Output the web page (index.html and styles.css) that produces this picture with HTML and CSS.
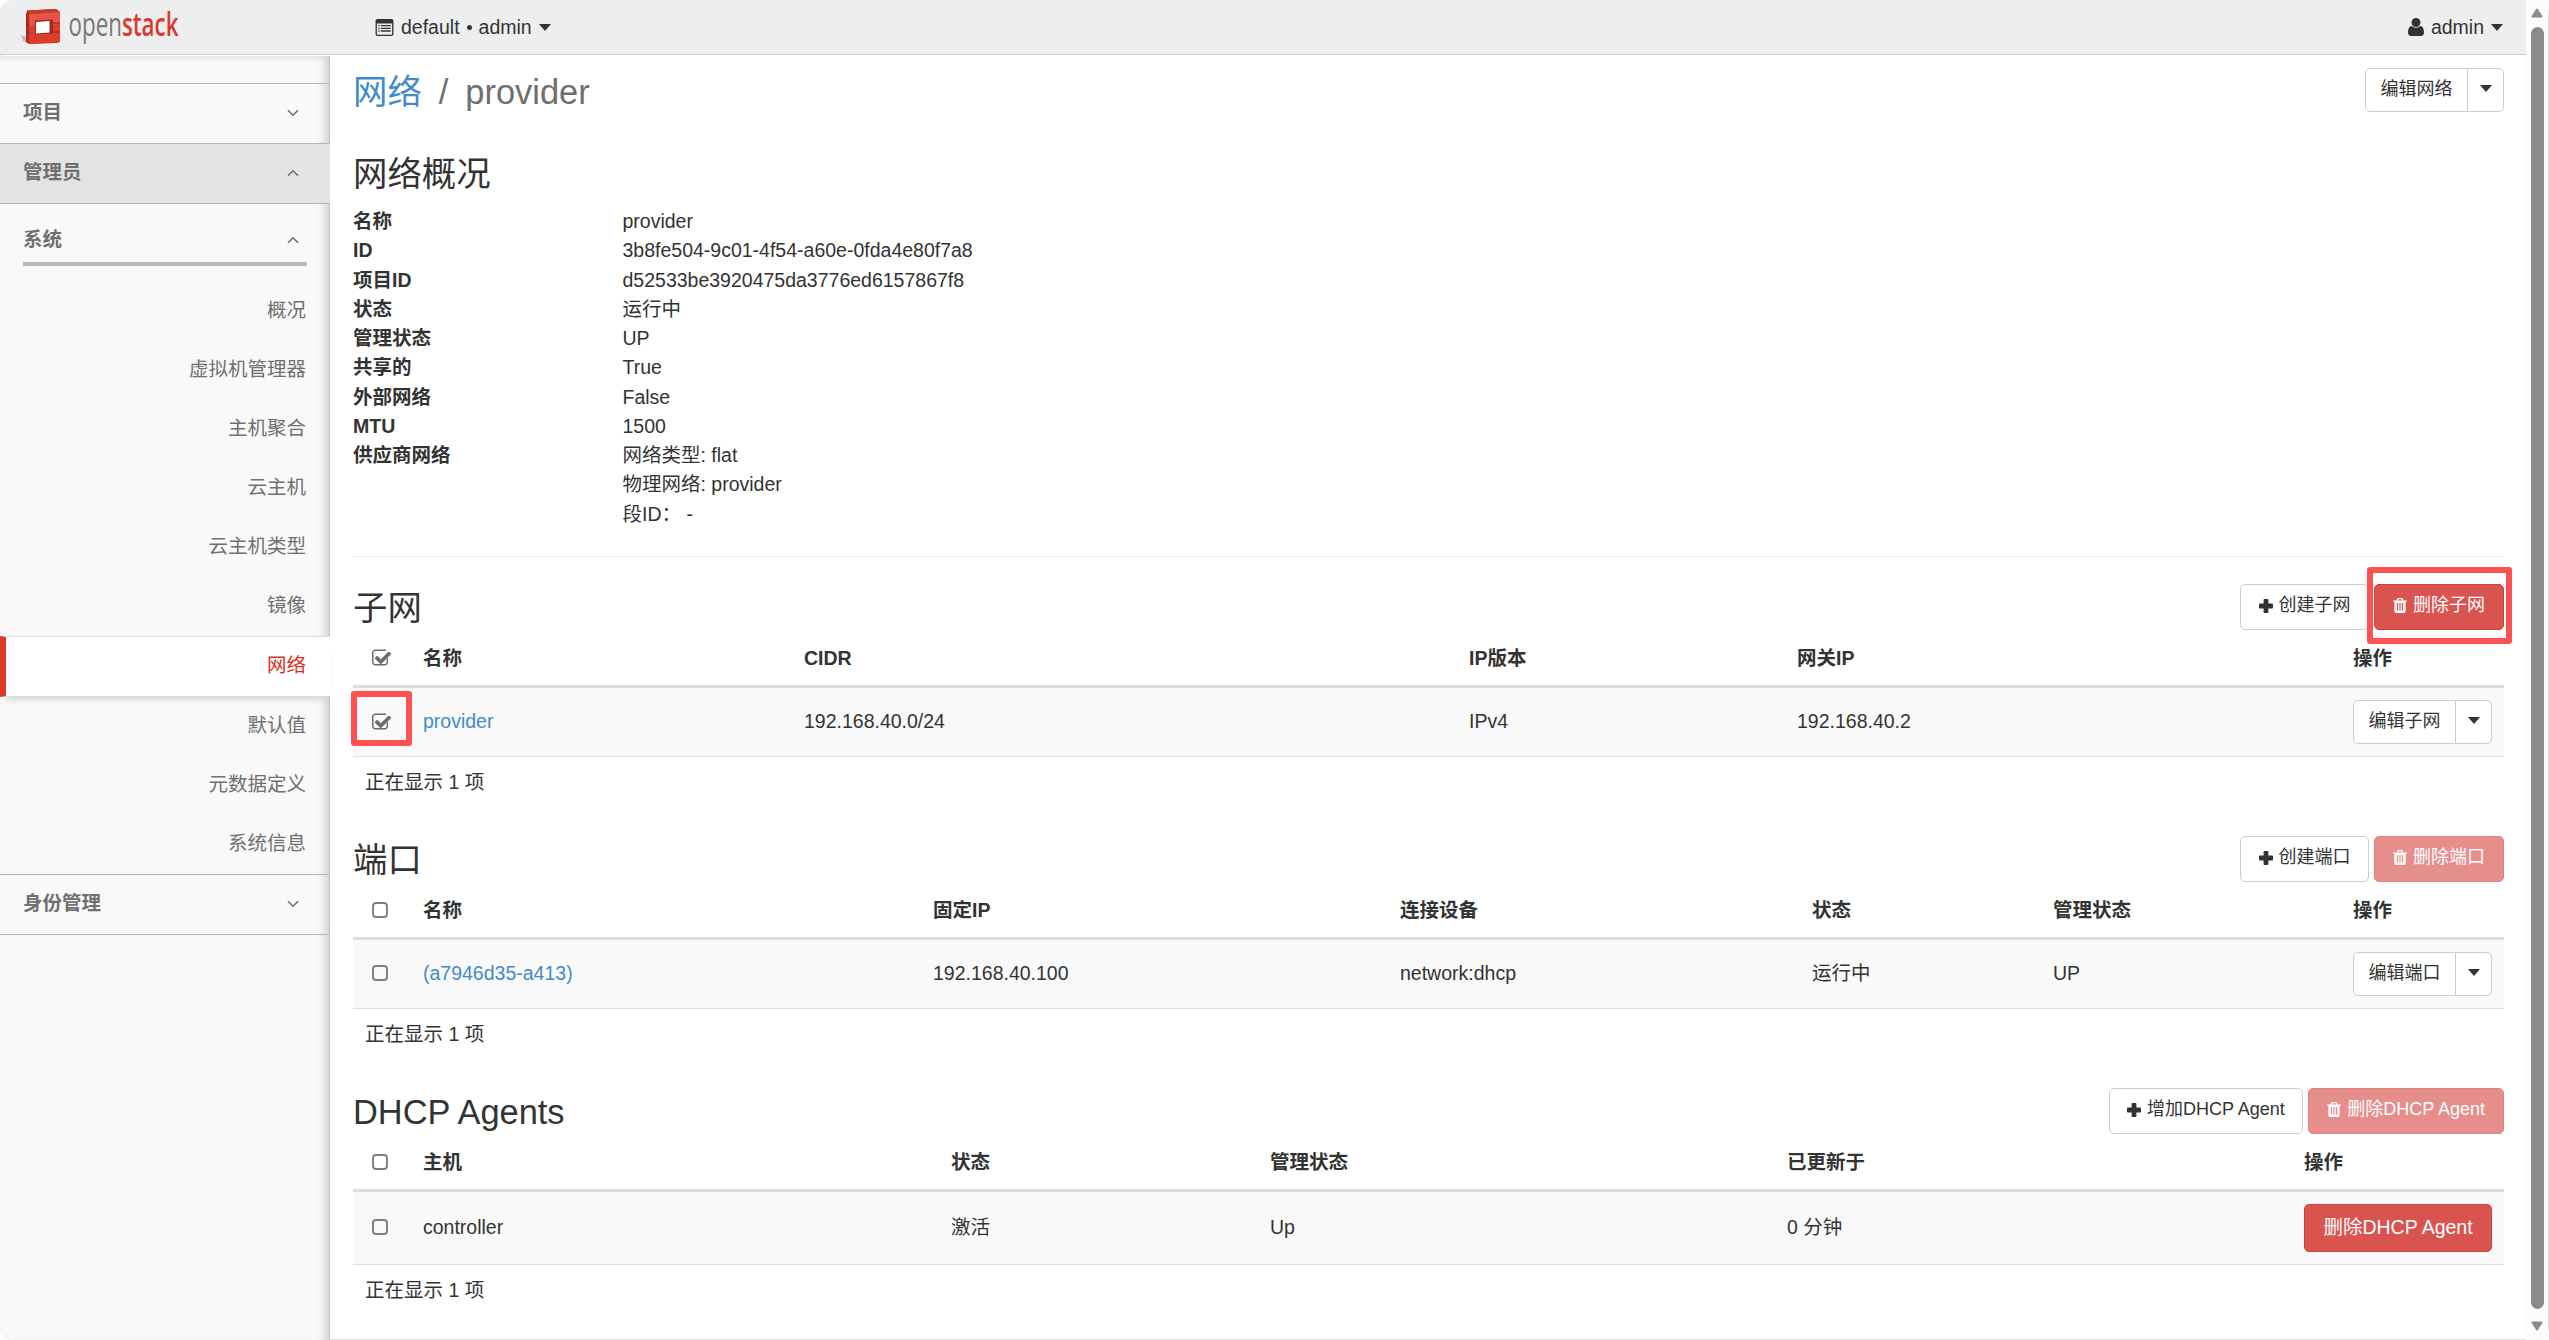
FILE: index.html
```html
<!DOCTYPE html>
<html lang="zh-CN">
<head>
  <meta charset="UTF-8">
  <meta name="viewport" content="width=device-width, initial-scale=1.0">
  <title>网络 / provider - OpenStack Dashboard</title>
  <link rel="stylesheet" href="styles.css">
</head>
<body>
  <!-- Icon sprites -->
  <svg class="sprites" width="0" height="0">
    <symbol id="check-on" viewBox="0 0 1664 1536">
      <path d="M1408 802v318q0 119-84.500 203.500t-203.500 84.500h-832q-119 0-203.500-84.500t-84.500-203.500v-832q0-119 84.500-203.500t203.500-84.500h832q63 0 117 25 15 7 18 23 3 17-9 29l-49 49q-10 10-23 10-3 0-9-2-23-6-45-6h-832q-66 0-113 47t-47 113v832q0 66 47 113t113 47h832q66 0 113-47t47-113v-254q0-13 9-22l64-64q10-10 23-10 6 0 12 3 20 8 20 29zM1639 441l-814 814q-24 24-57 24t-57-24l-430-430q-24-24-24-57t24-57l110-110q24-24 57-24t57 24l263 263 647-647q24-24 57-24t57 24l110 110q24 24 24 57t-24 57z" transform="translate(0 20)"/>
    </symbol>
    <symbol id="trash" viewBox="0 0 1408 1536">
      <path d="M512 1248v-704q0-14-9-23t-23-9h-64q-14 0-23 9t-9 23v704q0 14 9 23t23 9h64q14 0 23-9t9-23zM768 1248v-704q0-14-9-23t-23-9h-64q-14 0-23 9t-9 23v704q0 14 9 23t23 9h64q14 0 23-9t9-23zM1024 1248v-704q0-14-9-23t-23-9h-64q-14 0-23 9t-9 23v704q0 14 9 23t23 9h64q14 0 23-9t9-23zM480 256h448l-48-117q-7-9-17-11h-317q-10 2-17 11zM1408 288v64q0 14-9 23t-23 9h-96v948q0 83-47 143.500t-113 60.500h-832q-66 0-113-58.500t-47-141.500v-952h-96q-14 0-23-9t-9-23v-64q0-14 9-23t23-9h309l70-167q15-37 54-63t79-26h320q40 0 79 26t54 63l70 167h309q14 0 23 9t9 23z"/>
    </symbol>
    <symbol id="plus" viewBox="0 0 14 14">
      <path d="M5.500 0h3a.9.9 0 0 1 .9.900v3.700h3.700a.9.900 0 0 1 .9.900v3a.9.900 0 0 1-.9.900H9.400v3.700a.9.900 0 0 1-.9.900h-3a.9.900 0 0 1-.9-.9V9.400H.9a.9.900 0 0 1-.9-.9v-3a.9.900 0 0 1 .9-.9h3.700V.9a.9.900 0 0 1 .9-.9z"/>
    </symbol>
    <symbol id="list-alt" viewBox="0 0 20 19">
      <path fill-rule="evenodd" d="M2 0h16a2 2 0 0 1 2 2v15a2 2 0 0 1-2 2H2a2 2 0 0 1-2-2V2a2 2 0 0 1 2-2zM1.500 5v11.500q0 1 1 1h15q1 0 1-1V5z"/>
      <path d="M3 6.700h1.500v1.500H3zM3 9.700h1.500v1.500H3zM3 12.700h1.500v1.500H3zM6 6.700h11v1.500H6zM6 9.700h11v1.500H6zM6 12.700h11v1.500H6z"/>
    </symbol>
    <symbol id="user" viewBox="0 0 16 18">
      <path d="M8 9a4.400 4.400 0 1 0 0-9 4.400 4.400 0 0 0 0 9zM4 8c-3 0-4 3.500-4 6.600C0 17 1.200 18 3 18h10c1.800 0 3-1 3-3.400C16 11.500 15 8 12 8c-1 1-2.300 1.700-4 1.700S5 9 4 8z"/>
    </symbol>
    <symbol id="chevron" viewBox="0 0 12 8">
      <path d="M1 1.200l5 5 5-5" fill="none" stroke="currentColor" stroke-width="1.600"/>
    </symbol>
  </svg>

  <div class="app">
    <div class="page">
      <nav class="topbar">
        <svg class="logo" width="200" height="54" viewBox="0 0 200 54">
          <path d="M21 35l6 2v6l-4-2z" fill="#bdbdbd"/>
          <path d="M27 10.500l29-1.500 4 3v30l-4 1-27 1-3-2V14z" fill="#b02a20"/>
          <path d="M27 10.500l29-1.500 4 3-30 3z" fill="#c8392e"/>
          <path d="M29 14.500l31-2.500v30l-31 2z" fill="#dd3d2b"/>
          <path d="M29 14.500l31-2.500v12l-31 2z" fill="#e5554a"/>
          <path d="M35 20.500l18-1v14l-18 1z" fill="#a3271d"/>
          <path d="M36 22l13.500-1v11.500L36 33.500z" fill="#fff"/>
          <path d="M26 24h4M26 33h4M53 23h7M53 32h7" stroke="#96241b" stroke-width="1"/>
          <text x="68.500" y="35.500" textLength="110" lengthAdjust="spacingAndGlyphs"><tspan class="logo-open">open</tspan><tspan class="logo-stack">stack</tspan></text>
        </svg>
        <a class="context">
          <svg class="icon-list"><use href="#list-alt"/></svg>
          <span>default</span><span class="dot"></span><span>admin</span>
          <i class="caret"></i>
        </a>
        <a class="user">
          <svg class="icon-user"><use href="#user"/></svg>
          <span>admin</span>
          <i class="caret"></i>
        </a>
      </nav>

      <div class="body">
        <aside class="sidebar">
          <div class="panel first">项目<svg class="chev"><use href="#chevron"/></svg></div>
          <div class="panel open">管理员<svg class="chev up"><use href="#chevron"/></svg></div>
          <div class="group">系统<svg class="chev up"><use href="#chevron"/></svg></div>
          <ul class="menu">
            <li>概况</li>
            <li>虚拟机管理器</li>
            <li>主机聚合</li>
            <li>云主机</li>
            <li>云主机类型</li>
            <li>镜像</li>
            <li class="active">网络</li>
            <li>默认值</li>
            <li>元数据定义</li>
            <li>系统信息</li>
          </ul>
          <div class="panel last">身份管理<svg class="chev"><use href="#chevron"/></svg></div>
        </aside>

        <main class="content">
          <header class="page-header">
            <h1><a>网络</a><span class="slash">/</span><span>provider</span></h1>
            <div class="btn-group"><span class="btn btn-sm">编辑网络</span><span class="btn btn-drop"><i class="caret"></i></span></div>
          </header>

          <h3 class="overview-title">网络概况</h3>
          <dl class="overview">
            <dt>名称</dt><dd>provider</dd>
            <dt>ID</dt><dd>3b8fe504-9c01-4f54-a60e-0fda4e80f7a8</dd>
            <dt>项目ID</dt><dd>d52533be3920475da3776ed6157867f8</dd>
            <dt>状态</dt><dd>运行中</dd>
            <dt>管理状态</dt><dd>UP</dd>
            <dt>共享的</dt><dd>True</dd>
            <dt>外部网络</dt><dd>False</dd>
            <dt>MTU</dt><dd>1500</dd>
            <dt>供应商网络</dt><dd>网络类型: flat<br>物理网络: provider<br>段ID： -</dd>
          </dl>
          <hr>

          <section class="block">
            <div class="block-head">
              <h3>子网</h3>
              <span class="btn btn-act"><svg class="icon-plus"><use href="#plus"/></svg>创建子网</span>
              <span class="btn btn-act btn-danger marked"><svg class="icon-trash"><use href="#trash"/></svg>删除子网<b class="mark mark-delete"></b></span>
            </div>
            <table class="subnets">
              <colgroup><col class="c0"><col class="c1"><col class="c2"><col class="c3"><col class="c4"><col></colgroup>
              <thead>
                <tr><th><svg class="check"><use href="#check-on"/></svg></th><th>名称</th><th>CIDR</th><th>IP版本</th><th>网关IP</th><th>操作</th></tr>
              </thead>
              <tbody>
                <tr>
                  <td class="marked"><svg class="check"><use href="#check-on"/></svg><b class="mark mark-check"></b></td>
                  <td><a>provider</a></td><td>192.168.40.0/24</td><td>IPv4</td><td>192.168.40.2</td>
                  <td><div class="btn-group"><span class="btn btn-sm">编辑子网</span><span class="btn btn-drop"><i class="caret"></i></span></div></td>
                </tr>
              </tbody>
            </table>
            <div class="count">正在显示 1 项</div>
          </section>

          <section class="block">
            <div class="block-head">
              <h3>端口</h3>
              <span class="btn btn-act"><svg class="icon-plus"><use href="#plus"/></svg>创建端口</span>
              <span class="btn btn-act btn-danger disabled"><svg class="icon-trash"><use href="#trash"/></svg>删除端口</span>
            </div>
            <table class="ports">
              <colgroup><col class="c0"><col class="c1"><col class="c2"><col class="c3"><col class="c4"><col class="c5"><col></colgroup>
              <thead>
                <tr><th><i class="box"></i></th><th>名称</th><th>固定IP</th><th>连接设备</th><th>状态</th><th>管理状态</th><th>操作</th></tr>
              </thead>
              <tbody>
                <tr>
                  <td><i class="box"></i></td>
                  <td><a>(a7946d35-a413)</a></td><td>192.168.40.100</td><td>network:dhcp</td><td>运行中</td><td>UP</td>
                  <td><div class="btn-group"><span class="btn btn-sm">编辑端口</span><span class="btn btn-drop"><i class="caret"></i></span></div></td>
                </tr>
              </tbody>
            </table>
            <div class="count">正在显示 1 项</div>
          </section>

          <section class="block">
            <div class="block-head">
              <h3>DHCP Agents</h3>
              <span class="btn btn-act"><svg class="icon-plus"><use href="#plus"/></svg>增加DHCP Agent</span>
              <span class="btn btn-act btn-danger disabled"><svg class="icon-trash"><use href="#trash"/></svg>删除DHCP Agent</span>
            </div>
            <table class="agents">
              <colgroup><col class="c0"><col class="c1"><col class="c2"><col class="c3"><col class="c4"><col></colgroup>
              <thead>
                <tr><th><i class="box"></i></th><th>主机</th><th>状态</th><th>管理状态</th><th>已更新于</th><th>操作</th></tr>
              </thead>
              <tbody>
                <tr>
                  <td><i class="box"></i></td>
                  <td>controller</td><td>激活</td><td>Up</td><td>0 分钟</td>
                  <td><span class="btn btn-row btn-danger">删除DHCP Agent</span></td>
                </tr>
              </tbody>
            </table>
            <div class="count">正在显示 1 项</div>
          </section>
        </main>
      </div>
    </div>

    <div class="scrollbar">
      <svg width="12" height="10" viewBox="0 0 12 10"><path d="M6 1.500L10.500 8.500H1.500z" fill="#8b8b8b" stroke="#8b8b8b" stroke-width="2" stroke-linejoin="round"/></svg>
      <div class="thumb"></div>
      <svg width="12" height="10" viewBox="0 0 12 10"><path d="M6 8.500L1.500 1.500h9z" fill="#8b8b8b" stroke="#8b8b8b" stroke-width="2" stroke-linejoin="round"/></svg>
    </div>
  </div>
</body>
</html>
```

FILE: styles.css
```css
* {
  box-sizing: border-box;
}
body {
  margin: 0;
  background: #fff;
  color: #333;
  font-family: "Liberation Sans", "Noto Sans CJK SC", sans-serif;
  font-size: 19.5px;
  line-height: 29.25px;
}
a {
  color: #428bca;
}
h1, h3 {
  margin: 0;
  font-size: 34.4px;
  font-weight: normal;
  line-height: 40px;
}
.sprites {
  position: absolute;
}
.app {
  display: flex;
  width: 2549px;
  height: 1340px;
  border-radius: 14px;
  overflow: hidden;
  box-shadow: inset 0 0 0 1px #ddd;
}
.page {
  display: flex;
  flex-direction: column;
  width: 2526px;
}

/* Top bar */
.topbar {
  display: flex;
  align-items: center;
  height: 55px;
  padding-right: 23px;
  background: #eee;
  border-bottom: 1px solid #ccc;
}
.logo {
  margin-right: 174px;
}
.logo text {
  font-family: "Open Sans", sans-serif;
  font-size: 33px;
}
.logo-open {
  fill: #777;
}
.logo-stack {
  fill: #d63a32;
  font-weight: 600;
}
.context, .user {
  display: flex;
  align-items: center;
  color: #333;
}
.context span, .user span {
  padding-top: 1px;
}
.user {
  margin-left: auto;
}
.icon-list {
  width: 21px;
  height: 17px;
  margin-right: 6px;
  fill: #333;
}
.icon-user {
  width: 16px;
  height: 18px;
  margin-right: 7px;
  fill: #333;
}
.context .dot {
  width: 5px;
  height: 5px;
  margin: 0 7px;
  padding: 0;
  border-radius: 50%;
  background: #333;
}
.caret {
  display: block;
  border: 6px solid transparent;
  border-top: 7px solid #333;
  border-bottom: 0;
}
.topbar .caret {
  margin-left: 7px;
}

/* Sidebar */
.body {
  display: flex;
  flex: 1;
}
.sidebar {
  width: 330px;
  margin-top: 1px;
  padding-top: 27px;
  background: #f9f9f9;
  border-right: 1px solid #c4c4c4;
  box-shadow: inset -7px 3px 8px -3px rgba(0, 0, 0, 0.16);
  color: #6f6f6f;
}
.panel, .group {
  display: flex;
  align-items: center;
  justify-content: space-between;
  font-weight: bold;
}
.panel {
  height: 60px;
  padding: 0 30px 2px 23px;
  border-bottom: 1px solid #b5b5b5;
}
.panel.first, .panel.last {
  height: 61px;
  border-top: 1px solid #b5b5b5;
}
.panel.open {
  margin-right: -1px;
  padding-right: 31px;
  background: #e1e3e5;
}
.group {
  height: 62px;
  margin: 0 22px 0 23px;
  padding: 13px 8px 0 0;
  border-bottom: 4px solid #b9b9b9;
}
.chev {
  width: 12px;
  height: 8px;
}
.chev.up {
  transform: rotate(180deg);
}
.menu {
  margin: 0;
  padding: 14.5px 0 0;
  list-style: none;
}
.menu li {
  height: 59.2px;
  padding: 15px 23px 0 0;
  text-align: right;
}
.menu .active {
  height: 61px;
  margin-right: -1px;
  padding-top: 14px;
  padding-right: 24px;
  background: #fff;
  border-top: 1px solid #ddd;
  border-bottom: 1px solid #ddd;
  border-left: 6px solid #db3b27;
  box-shadow: 0 6px 8px -5px rgba(0, 0, 0, 0.2);
  color: #d9301f;
}
.menu .active ~ li {
  padding-top: 14px;
}

/* Content */
.content {
  flex: 1;
  padding: 13px 22px 0 23px;
}
.page-header {
  display: flex;
  justify-content: space-between;
  align-items: flex-start;
  height: 84px;
}
.page-header h1 {
  display: flex;
  padding-top: 4px;
  color: #6f6f6f;
}
.slash {
  margin: 0 17px;
}
.overview-title {
  height: 55px;
  padding-top: 2px;
}
.overview {
  display: grid;
  grid-template-columns: 269.5px 1fr;
  margin: 0;
}
.overview dt {
  font-weight: bold;
}
.overview dd {
  margin: 0;
}
hr {
  margin: 27px 0;
  border: 0;
  border-top: 1px solid #eee;
}

/* Buttons */
.btn {
  display: inline-flex;
  align-items: center;
  justify-content: center;
  background: #fff;
  border: 1px solid #ccc;
  border-radius: 5px;
  font-size: 18px;
  white-space: nowrap;
}
.btn-group {
  display: flex;
}
.btn-sm {
  width: 103px;
  height: 44px;
  padding-bottom: 1px;
  border-radius: 5px 0 0 5px;
}
.btn-drop {
  width: 37px;
  margin-left: -1px;
  padding-bottom: 3px;
  border-radius: 0 5px 5px 0;
}
.btn-act {
  height: 46px;
  padding: 0 17.5px 2px;
}
.btn-act.btn-danger {
  padding: 0 18px 2px;
}
.btn-danger {
  background: #d9534f;
  border-color: #d43f3a;
  color: #fff;
}
.btn-row {
  width: 188px;
  height: 48px;
  padding-bottom: 1px;
  font-size: 19.5px;
}
.disabled {
  opacity: 0.65;
}
.icon-plus {
  width: 14px;
  height: 14px;
  margin-right: 6px;
  fill: #333;
}
.icon-trash {
  width: 14px;
  height: 15px;
  margin-right: 6px;
  fill: #fff;
}

/* Tables */
.block {
  height: 252px;
}
.block-head {
  display: flex;
  height: 46px;
  gap: 5px;
}
.block-head h3 {
  margin-right: auto;
  padding-top: 4px;
}
table {
  width: 100%;
  border-collapse: separate;
  border-spacing: 0;
  table-layout: fixed;
}
th, td {
  padding: 0 12px;
  text-align: left;
}
th {
  height: 58px;
  padding-top: 2px;
  border-bottom: 3px solid #ddd;
}
td {
  height: 69px;
  background: #f9f9f9;
  border-bottom: 1px solid #ddd;
}
.agents td {
  height: 73px;
}
th:first-child, td:first-child {
  padding-left: 19px;
}
.c0 { width: 58px; }
.subnets .c1 { width: 381px; }
.subnets .c2 { width: 665px; }
.subnets .c3 { width: 328px; }
.subnets .c4 { width: 556px; }
.ports .c1 { width: 510px; }
.ports .c2 { width: 467px; }
.ports .c3 { width: 412px; }
.ports .c4 { width: 241px; }
.ports .c5 { width: 300px; }
.agents .c1 { width: 528px; }
.agents .c2 { width: 319px; }
.agents .c3 { width: 517px; }
.agents .c4 { width: 517px; }
.check {
  display: block;
  width: 19px;
  height: 18px;
  fill: #6a6a6a;
}
.box {
  display: block;
  width: 16px;
  height: 16px;
  border: 2px solid #808080;
  border-radius: 4px;
}
td .box {
  margin-top: -1px;
}
.count {
  padding: 11px 12px 0;
}

/* Highlight frames */
.marked {
  position: relative;
}
.mark {
  position: absolute;
  border: 6px solid #fe5151;
  border-radius: 3px;
}
.mark-delete {
  top: -18px;
  left: -8px;
  width: 145px;
  height: 77px;
}
.mark-check {
  top: 3px;
  left: -2px;
  width: 61px;
  height: 55px;
}

/* Scrollbar */
.scrollbar {
  display: flex;
  flex-direction: column;
  align-items: center;
  width: 23px;
  padding: 8px 0 0;
  background: #fcfcfc;
  border-right: 1px solid #ddd;
}
.thumb {
  width: 13px;
  height: 1282px;
  margin: 9px 0 12px;
  border-radius: 7px;
  background: #8b8b8b;
}
```
